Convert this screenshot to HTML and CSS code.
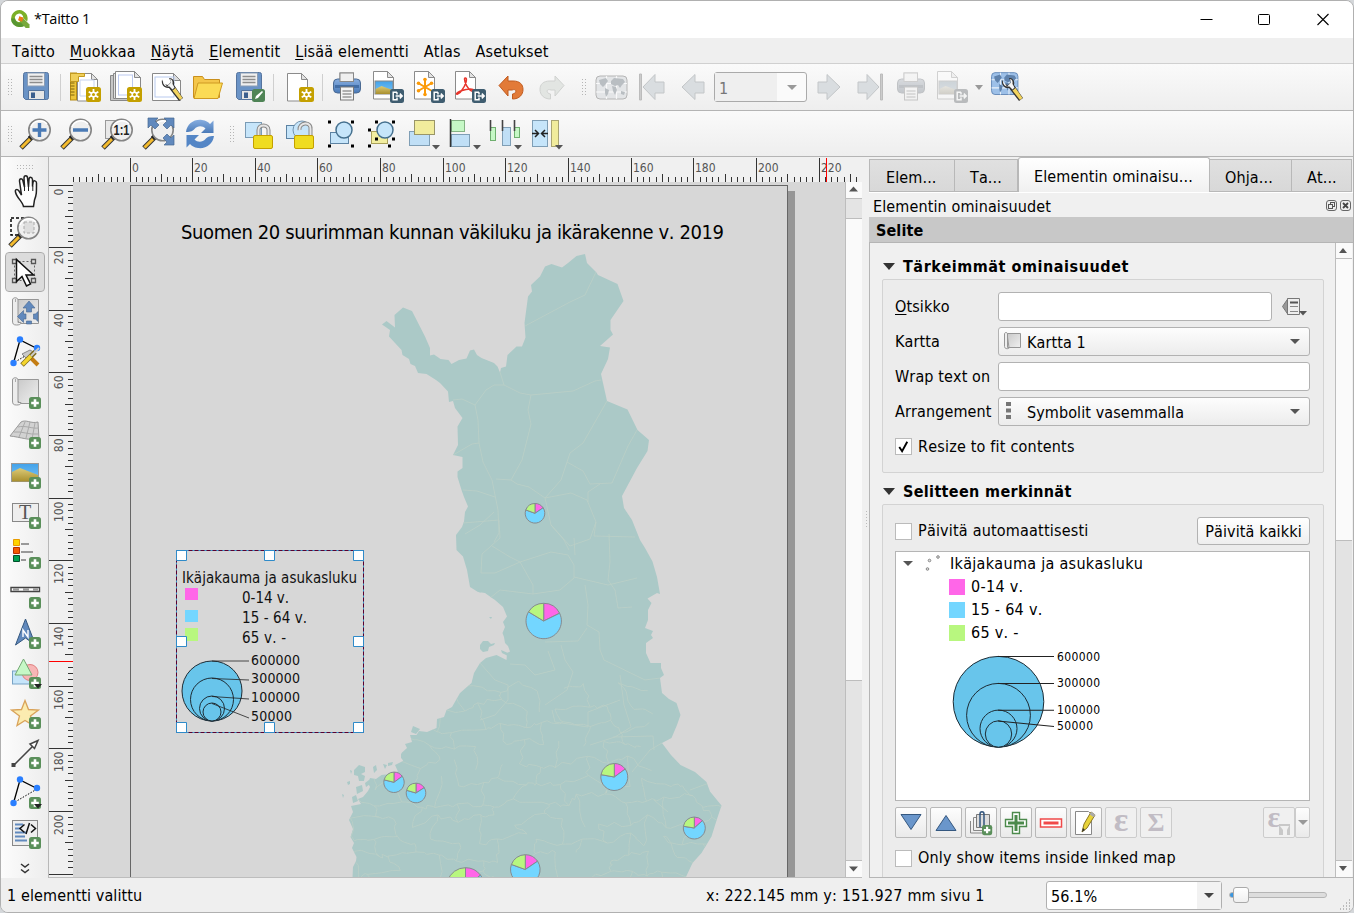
FILE: index.html
```html
<!DOCTYPE html>
<html lang="fi">
<head>
<meta charset="utf-8">
<title>*Taitto 1</title>
<link rel="stylesheet" href="styles.css">
</head>
<body>
<svg class="defs" width="0" height="0">
  <defs>
    <linearGradient id="gGrey" x1="0" x2="1" y1="0" y2="1"><stop offset="0" stop-color="#c9c9c9"/><stop offset="1" stop-color="#f0f0f0"/></linearGradient>
    <linearGradient id="gBlue" x1="0" x2="0" y1="0" y2="1"><stop offset="0" stop-color="#86ade0"/><stop offset="1" stop-color="#4a7ab8"/></linearGradient>
    <linearGradient id="gSky" x1="0" x2="0" y1="0" y2="1"><stop offset="0" stop-color="#42a2ea"/><stop offset="1" stop-color="#7cc4f5"/></linearGradient>
    <linearGradient id="gSand" x1="0" x2="0" y1="0" y2="1"><stop offset="0" stop-color="#dccb78"/><stop offset="1" stop-color="#a98f2e"/></linearGradient>
    <g id="plus"><rect width="12" height="12" rx="2.5" fill="#5a8f5a"/><path d="M6 2.2v7.6M2.2 6h7.6" stroke="#fff" stroke-width="2.6"/></g>
    <g id="star"><rect width="15" height="15" rx="2.5" fill="#c4a000"/><path d="M7.5 2v11M2.7 4.7l9.6 5.6M2.7 10.3l9.6-5.6" stroke="#fff" stroke-width="1.8"/><circle cx="7.5" cy="7.5" r="3" fill="#fff"/><circle cx="7.5" cy="7.5" r="1.5" fill="#c4a000"/></g>
    <g id="export"><rect width="14" height="14" rx="2.5" fill="#3f5d70"/><path d="M7 3.2H3.2v7.6H7V8.5M7 3.2v2.3M5.6 7H12M9.8 4.6L12.2 7 9.8 9.4" fill="none" stroke="#fff" stroke-width="1.5"/></g>
    <g id="sheet"><path d="M.5.5h14l6 6v21.5H.5z" fill="#fff" stroke="#8b8b8b"/><path d="M14.5.5v6h6z" fill="#e3e3e3" stroke="#8b8b8b"/></g>
    <g id="floppy"><path d="M5.5 5.5a2 2 0 0 1 2-2h21a2 2 0 0 1 2 2v23a2 2 0 0 1-2 2h-21l-2-2z" fill="#6a93c6" stroke="#55749e"/><rect x="9.500" y="4" width="17" height="13" fill="#f0f0f0" stroke="#8a9db5"/><path d="M11.500 7.500h13M11.500 10.500h13M11.500 13.500h13" stroke="#8d8d8d" stroke-width="1.300"/><path d="M10.500 21.500h16v9h-16z" fill="#e6e6e6" stroke="#55749e"/><rect x="13" y="23.500" width="4" height="5.500" fill="#3c5f8e"/></g>
    <g id="lens"><path d="M3 32L15 20" stroke="#333" stroke-width="5"/><path d="M3.500 31.500L13 22" stroke="#f4bb2e" stroke-width="3"/><path d="M11.500 22.500l4-3.800" stroke="#222" stroke-width="4.500"/><circle cx="21.500" cy="14" r="10.700" fill="#efefef" stroke="#858585" stroke-width="1.600"/><path d="M13 11a9.500 9.500 0 0 1 16-3" stroke="#fff" stroke-width="1.500" fill="none"/></g>
    <g id="roll"><path d="M10.500 5.500h21v24h-18l-3-3z" fill="url(#gGrey)" stroke="#969696"/><path d="M5.500 6c0-3 5.500-3 5.500 0v22.500h3c0 2-2 2.500-4.500 2.500-3 0-4-1-4-4z" fill="#ececec" stroke="#969696"/><path d="M8.500 5v3" stroke="#aaa"/></g>
    <g id="printer"><rect x="11" y="4" width="13.500" height="11" fill="#eee" stroke="#888"/><rect x="4.500" y="10" width="27" height="14" rx="4" fill="url(#gBlue)" stroke="#4b6a92"/><rect x="11" y="4" width="13.500" height="8.500" fill="#efefef" stroke="#888"/><rect x="6" y="16" width="24" height="3" fill="#426ea6"/><rect x="11.500" y="18" width="13" height="13" fill="#f3f3f3" stroke="#777"/><path d="M13.500 22h9M13.500 25h9M13.500 28h9" stroke="#999" stroke-width="1.300"/></g>
    <g id="wrench"><path d="M11 9.500c-1 5 2 9 7 8.500l10 13 4-3-9-13c1-4-1-7-5-7l2 4-3 3-4-1z" fill="#333"/><path d="M12 11c0 4 2.500 6 6.500 5.500l3 3 2-2-2-3.500c.5-3-.5-4.500-2.500-5l1 3.500-4 4z" fill="#f5f5f5"/><path d="M21.500 20.500l7.500 9.500 2.500-2-7-10z" fill="#f2d35e"/></g>
    <g id="globe"><rect x="3" y="7" width="31" height="23" rx="4"/><path d="M13.500 7v23M23.500 7v23M3 14.500h31M3 23h31" stroke="#fff" stroke-width="1.200" opacity=".8"/></g>
    <path id="lands" d="M6 11l7-2 2 3-3 4-2 2-3-3zM12 19l4 2-1 4-2 3-1-4zM18 12l3-3 9 1 2 3-3 3-2 3-2-3-3 1-4-2zM19 17l4 1 1 3-2 5-2-4zM28 22l4 1-1 3-3-1z"/>
    <g id="photo"><rect x="4.500" y="9.500" width="27" height="18" fill="url(#gSky)" stroke="#999"/><path d="M5 18l8-4 18 7v6.500H5z" fill="url(#gSand)"/></g>
    <g id="nodes"><path d="M6.500 29L13 6l17 8.500" fill="none" stroke="#000" stroke-width="1.300"/><path d="M8 28l22-13" stroke="#000" stroke-dasharray="1.500 1.500"/><circle cx="13" cy="5.500" r="3.200" fill="#2a7fff"/><circle cx="30" cy="14" r="3.200" fill="#2a7fff"/><circle cx="6.500" cy="29" r="3.200" fill="#2a7fff"/></g>
    <path id="drop" d="M0 0h8l-4 4.500z" fill="#555"/>
    <path id="drop-dark" d="M0 0h8l-4 4.500z" fill="#222"/>
  </defs>
</svg>
<div class="window">
  <header class="titlebar">
    <svg class="logo" viewBox="0 0 20 20"><path d="M9.500 1a8.500 8.500 0 1 0 6 14.700L11.800 12A4.200 4.200 0 1 1 13.300 9l3.800 3.600A8.600 8.600 0 0 0 9.500 1z" fill="#7bb027"/><path d="M9.500 18A8.500 8.500 0 0 1 1 9.500h4.200a4.400 4.400 0 0 0 6.600 3.800l3.700 3A8.500 8.500 0 0 1 9.500 18z" fill="#589632"/><path d="M9 7.800l3.500.7 7 7V19h-3.800L9.500 12z" fill="#78a93a"/><path d="M8.500 7.600h4.300v4.200H8.500z" fill="#ee7913" transform="rotate(20 10 10)"/></svg>
    <span class="title">*Taitto 1</span>
    <svg class="controls" viewBox="0 0 140 20"><path d="M1.500 9.500h12" stroke="#000"/><rect x="59.500" y="4.500" width="11" height="10" rx="1" fill="none" stroke="#000"/><path d="M118.500 4l11 11M129.500 4l-11 11" stroke="#000" stroke-width="1.100"/></svg>
  </header>
  <nav class="menubar"><span>Taitto</span><span><u>M</u>uokkaa</span><span><u>N</u>äytä</span><span><u>E</u>lementit</span><span><u>L</u>isää elementti</span><span>Atlas</span><span>Asetukset</span></nav>

  <div class="toolbar">
    <i class="grip"></i>
    <svg class="ic" viewBox="0 0 36 36"><use href="#floppy"/></svg>
    <i class="sep sep-a"></i>
    <svg class="ic" viewBox="0 0 36 36"><use href="#sheet" x="9" y="4"/><rect x="2.500" y="4" width="6" height="27" fill="#edc53a" stroke="#b78c13"/><path d="M2.500 4.500h14v3h-6v5H2.500z" fill="#f0cf5a" stroke="#c39a20"/><path d="M2.500 14h4M2.500 17h4M2.500 20h4M2.500 23h4M2.500 26h4" stroke="#7e640f"/><path d="M12 11v16h14V11z" fill="none" stroke="#c6d3f0"/><use href="#star" x="18" y="18"/></svg>
    <svg class="ic" viewBox="0 0 36 36"><path d="M1.500 6.500h20v25h-20z" fill="#c7c7c7" stroke="#888"/><path d="M4.500 4.500h20v25h-20z" fill="#e0e0e0" stroke="#888"/><path d="M6.500 2.500h19l6 6v21h-25z" fill="#fff" stroke="#888"/><path d="M25.500 2.500v6h6z" fill="#e3e3e3" stroke="#888"/><rect x="9.500" y="6" width="14" height="20" fill="#fff" stroke="#bccaf0"/><use href="#star" x="18" y="18"/></svg>
    <svg class="ic" viewBox="0 0 36 36"><path d="M2.500 4.500h21l7 7v20h-28z" fill="#fff" stroke="#888"/><path d="M23.500 4.500v7h7z" fill="#ddd" stroke="#888"/><rect x="5" y="8" width="19" height="20" fill="none" stroke="#b8c9ee"/><use href="#wrench" x="1" y="1"/></svg>
    <svg class="ic" viewBox="0 0 36 36"><path d="M2.500 7.500h9l2 3h15v18h-26z" fill="#f4c64a" stroke="#c98f1d"/><path d="M7 14h24.500L27 29.500H3z" fill="#fbdb55" stroke="#cf9a22"/></svg>
    <svg class="ic" viewBox="0 0 36 36"><use href="#floppy" x="-1"/><rect x="20" y="20" width="13" height="13" rx="2.500" fill="#4f8456"/><path d="M23 30l1-3 6-5 1 1-5 6z" fill="#fff"/></svg>
    <i class="sep sep-b"></i>
    <svg class="ic" viewBox="0 0 36 36"><use href="#sheet" x="4" y="4"/><use href="#star" x="16" y="18"/></svg>
    <i class="sep sep-c"></i>
    <svg class="ic" viewBox="0 0 36 36"><use href="#printer"/></svg>
    <svg class="ic" viewBox="0 0 36 36"><use href="#sheet" x="3" y="2"/><rect x="5" y="12" width="18" height="13" fill="url(#gSky)" stroke="#888"/><path d="M5.500 20l6-3 11 4v4h-17z" fill="url(#gSand)"/><use href="#export" x="20" y="20"/></svg>
    <svg class="ic" viewBox="0 0 36 36"><use href="#sheet" x="3" y="2"/><path d="M14 10v16M7 14l14 8M7 22l14-8" stroke="#fb9a08" stroke-width="2"/><circle cx="14" cy="10.500" r="1.800" fill="#fb9a08"/><circle cx="14" cy="25.500" r="1.800" fill="#fb9a08"/><circle cx="7.500" cy="14.300" r="1.800" fill="#fb9a08"/><circle cx="20.500" cy="14.300" r="1.800" fill="#fb9a08"/><circle cx="7.500" cy="21.700" r="1.800" fill="#fb9a08"/><use href="#export" x="20" y="20"/></svg>
    <svg class="ic" viewBox="0 0 36 36"><use href="#sheet" x="3" y="2"/><path d="M13 9c3-1 1 7-3 12-2 3-5 5-5.500 4 0-2 8-5 14-5 4 0 4 2 1 2-3-1-7-8-7-12 0-1 .200-1 .500-1z" fill="none" stroke="#e8352b" stroke-width="1.500"/><use href="#export" x="20" y="20"/></svg>
    <svg class="ic" viewBox="0 0 36 36"><path d="M6 16.500L15 7v5h5c7 0 10 3.500 10 8.500 0 5-3.500 9.500-10.500 9.500v-5c4 0 5-6-.500-4h-4v6z" fill="#e27a38" stroke="#c05a1e"/></svg>
    <svg class="ic" viewBox="0 0 36 36"><path d="M30 16.500L21 7v5h-5c-7 0-10 3.500-10 8.500 0 5 3.500 9.500 10.500 9.500v-5c-4 0-5-6 .500-4h4v6z" fill="#e2e5e2" stroke="#d0d2d0"/></svg>
    <i class="grip grip-b"></i>
    <svg class="ic" viewBox="0 0 36 36"><g fill="#e3e5e7" stroke="#b5b5b5"><use href="#globe"/></g><use href="#lands" fill="#b9bec2"/></svg>
    <svg class="ic" viewBox="0 0 36 36"><path d="M5.500 5v26h2V5z" fill="#ccc" stroke="#bcbcbc"/><path d="M9 18L21 5.500v7.500h9v11h-9v6.500z" fill="#d9dde0" stroke="#c3c6c8"/></svg>
    <svg class="ic" viewBox="0 0 36 36"><path d="M7 18L20 5.500v7.500h9v11h-9v6.500z" fill="#d9dde0" stroke="#c3c6c8"/></svg>
    <div class="pagebox"><span>1</span><b></b></div>
    <svg class="ic" viewBox="0 0 36 36"><path d="M29 18L16 5.500v7.500H7v11h9v6.500z" fill="#d9dde0" stroke="#c3c6c8"/></svg>
    <svg class="ic" viewBox="0 0 36 36"><path d="M28.500 5v26h2V5z" fill="#ccc" stroke="#bcbcbc"/><path d="M27 18L15 5.500v7.500H6v11h9v6.500z" fill="#d9dde0" stroke="#c3c6c8"/></svg>
    <svg class="ic dim" viewBox="0 0 36 36"><use href="#printer"/></svg>
    <svg class="ic dim" viewBox="0 0 36 36"><use href="#sheet" x="3" y="2"/><rect x="5" y="12" width="18" height="13" fill="url(#gSky)" stroke="#888"/><path d="M5.500 20l6-3 11 4v4h-17z" fill="url(#gSand)"/><use href="#export" x="20" y="20"/></svg>
    <i class="arrow"></i>
    <svg class="ic" viewBox="0 0 36 36"><g transform="translate(0 -3) scale(.85 .95)"><g fill="#9dc0e8" stroke="#6086b5"><use href="#globe"/></g><use href="#lands" fill="#5f82ac"/></g><use href="#wrench" x="2" y="1"/></svg>
  </div>

  <div class="toolbar toolbar-view">
    <i class="grip"></i>
    <svg class="ic" viewBox="0 0 36 36"><use href="#lens"/><path d="M21.500 7v14M14.500 14h14" stroke="#4a7ab5" stroke-width="3.400"/></svg>
    <svg class="ic" viewBox="0 0 36 36"><use href="#lens"/><path d="M14 14h15" stroke="#4a7ab5" stroke-width="3.400"/></svg>
    <svg class="ic" viewBox="0 0 36 36"><rect x="5.500" y="4.500" width="14" height="18" fill="#e8e8e8" stroke="#999"/><use href="#lens"/><text x="13.500" y="19" class="onetoone" textLength="16" lengthAdjust="spacingAndGlyphs">1:1</text></svg>
    <svg class="ic" viewBox="0 0 36 36"><use href="#lens"/><path d="M7 2h10l-3 3 4 4-4 4-4-4-3 3zM33 2H23l3 3-4 4 4 4 4-4 3 3zM33 29H23l3-3-4-4 4-4 4 4 3-3z" fill="#6189bd" stroke="#46678f" stroke-width=".7"/></svg>
    <svg class="ic" viewBox="0 0 36 36"><path d="M4 16C5 8 12 3 20 4c4 .500 6 2 8 4l3.500-3.500V17H19l4.500-4.500c-3-3-8-3-11 .500-2 2-3 3-8.500 3z" fill="url(#gBlue)"/><path d="M32 20c-1 8-8 13-16 12-4-.500-6-2-8-4l-3.500 3.500V19H17l-4.500 4.500c3 3 8 3 11-.500 2-2 3-3 8.500-3z" fill="#5486c6"/></svg>
    <i class="grip grip-b"></i>
    <svg class="ic" viewBox="0 0 36 36"><rect x="4.500" y="6.500" width="16" height="15" fill="#c6e5fa" stroke="#7a9bb5"/><path d="M17.500 21v-7c0-6 10-6 10 0v7" fill="none" stroke="#888" stroke-width="4"/><path d="M17.500 21v-7c0-6 10-6 10 0v7" fill="none" stroke="#e6e6e6" stroke-width="2"/><rect x="12.500" y="19.500" width="19" height="13" rx="1.500" fill="#efdc20" stroke="#c4a000"/></svg>
    <svg class="ic" viewBox="0 0 36 36"><rect x="4.500" y="9.500" width="16" height="13" fill="#c6e5fa" stroke="#5d83a3"/><circle cx="20" cy="14" r="9" fill="#c6e5fa" stroke="#7293ae"/><path d="M17.500 14c-1-8 12-9 11-1v8" fill="none" stroke="#888" stroke-width="4"/><path d="M17.500 14c-1-8 12-9 11-1v8" fill="none" stroke="#e6e6e6" stroke-width="2"/><rect x="12.500" y="19.500" width="19" height="13" rx="1.500" fill="#efdc20" stroke="#c4a000"/></svg>
    <svg class="ic" viewBox="0 0 36 36"><rect x="7.500" y="16.500" width="18" height="11" fill="#c6e5fa" stroke="#5d83a3"/><circle cx="21" cy="14" r="8" fill="#c6e5fa" stroke="#46718f" stroke-width="1.500"/><path d="M5 6h3M28 6h3M5 30h3M28 30h3" stroke="#000" stroke-width="3"/></svg>
    <svg class="ic" viewBox="0 0 36 36"><rect x="7.500" y="15.500" width="16" height="12" fill="#f2eea0" stroke="#aaa15b"/><circle cx="21" cy="14" r="8" fill="#c6e5fa" stroke="#46718f" stroke-width="1.500"/><path d="M11 6h3M28 6h3M4 14h3M11 23h3M28 23h3M4 30h3M24 30h3" stroke="#000" stroke-width="3"/></svg>
    <svg class="ic" viewBox="0 0 36 36"><rect x="4.500" y="15.500" width="20" height="14" fill="#c0dff6" stroke="#7f9eb5"/><rect x="9.500" y="4.500" width="20" height="14" fill="#f1ec9c" stroke="#999568"/><use href="#drop" x="27" y="29"/></svg>
    <svg class="ic" viewBox="0 0 36 36"><rect x="5.500" y="4.500" width="13" height="11" fill="#c6f8c6" stroke="#84b284"/><rect x="5.500" y="18.500" width="18" height="12" fill="#c0dff6" stroke="#7f9eb5"/><path d="M4.500 3v28" stroke="#333" stroke-width="1.500"/><use href="#drop" x="27" y="29"/></svg>
    <svg class="ic" viewBox="0 0 36 36"><rect x="3.500" y="11.500" width="5" height="13" fill="#c6f8c6" stroke="#6faf6f"/><rect x="15.500" y="11.500" width="8" height="18" fill="#c0dff6" stroke="#7f9eb5"/><rect x="27.500" y="11.500" width="5" height="10" fill="#c6f8c6" stroke="#6faf6f"/><path d="M3.500 4v11M15.500 4v11M27.500 4v11" stroke="#444" stroke-width="1.600"/><use href="#drop" x="27" y="29"/></svg>
    <svg class="ic" viewBox="0 0 36 36"><rect x="4.500" y="4.500" width="15" height="26" fill="#c6e5fa" stroke="#7f9eb5"/><rect x="23.500" y="4.500" width="7" height="26" fill="#f1ec9c" stroke="#aaa573"/><path d="M4 17.500h6M7 14l3.500 3.500L7 21M20 17.500h-6M17 14l-3.500 3.500L17 21" fill="none" stroke="#222" stroke-width="1.500"/><use href="#drop" x="27" y="29"/></svg>
  </div>

  <main class="workspace">
    <aside class="toolbox">
      <i class="grip-h"></i>
      <svg class="ic" viewBox="0 0 36 36"><path d="M16.500 32.500c-1-5-7-9-8-14.500-.800-3 2-3 3.500-1l2.500 4-2-14c0-3 3-3 3.500 0l1.500 6-.500-9c0-3 3.500-3 3.500 0l1 9 .500-7.500c0-3 3-3 3.500 0v7l.500-4c.500-2.500 3.500-2 3.500.500 0 10 0 12-2 17l-1 6.500z" fill="#fff" stroke="#222" stroke-width="1.500"/><path d="M17.500 12v5M21.500 11v6M25.800 12v5" stroke="#222"/></svg>
      <svg class="ic" viewBox="0 0 36 36"><path d="M4 4h20v17H4z" fill="none" stroke="#000" stroke-width="1.500" stroke-dasharray="3 2"/><use href="#lens"/><path d="M17 8h10v11H17z" fill="#dedede" stroke="#aaa" stroke-dasharray="3 2"/></svg>
      <svg class="ic selected" viewBox="0 0 36 36"><rect x="7.500" y="7.500" width="20" height="19" fill="none" stroke="#666" stroke-dasharray="2 2"/><path d="M5.500 5.500h4v4h-4zM24.500 5.500h4v4h-4zM5.500 24.500h4v4h-4zM24.500 24.500h4v4h-4z" fill="#ddd" stroke="#555" stroke-width="1.300"/><path d="M9.500 5.500v22l5.500-5 4.500 9.500 4-2-4.500-9h7.500z" fill="#fff" stroke="#111" stroke-width="1.500"/></svg>
      <svg class="ic" viewBox="0 0 36 36"><use href="#roll"/><path d="M22 7l6 7h-3.500v4h-5v-4H16zM10.500 22.500l6-6v3.500h2.500v5h-2.500v3.500zM31 17.500v10l-2.500-2.500h-2v-5h2zM19.500 30v-3h5v3z" fill="#6189bd" stroke="#46678f" stroke-width=".6"/></svg>
      <svg class="ic" viewBox="0 0 36 36"><use href="#nodes"/><path d="M15 20l8-4 5 3-8 6z" fill="#c9c9c9" stroke="#888"/><path d="M22 22l9 9" stroke="#c47d13" stroke-width="4"/><path d="M15 31l13-13" stroke="#7e6b20" stroke-width="5"/><path d="M15.500 30.500L24 22" stroke="#f4d52e" stroke-width="3.500"/><path d="M24 22l8-8" stroke="#ccc" stroke-width="2"/></svg>
      <svg class="ic" viewBox="0 0 36 36"><use href="#roll"/><use href="#plus" x="22" y="23"/></svg>
      <svg class="ic" viewBox="0 0 36 36"><path d="M14 8c5-3 10 2 17 0l1 17c-9 2-19-2-29-3z" fill="#d2d2d2" stroke="#999"/><path d="M11 13c7-2 14 2 21 1M7 18c8-1 15 3 24 2M18 8L12 23M23 8l-4 16M28 9l-3 16" stroke="#aaa" fill="none"/><use href="#plus" x="22" y="23"/></svg>
      <svg class="ic" viewBox="0 0 36 36"><use href="#photo"/><use href="#plus" x="22" y="23"/></svg>
      <svg class="ic" viewBox="0 0 36 36"><rect x="5.500" y="9.500" width="26" height="18" fill="#eee" stroke="#888"/><text x="18" y="24.500" class="icon-t">T</text><use href="#plus" x="22" y="23"/></svg>
      <svg class="ic" viewBox="0 0 36 36"><path d="M6.500 5.500h6v6h-6z" fill="#ffd400" stroke="#e79b00"/><path d="M6.500 13.500h6v6h-6z" fill="#f25a00" stroke="#b92d00"/><path d="M6.500 21.500h6v6h-6z" fill="#00a050" stroke="#00502b"/><path d="M14 10h8M14 18h12M14 26h5" stroke="#999" stroke-width="2"/><use href="#plus" x="22" y="23"/></svg>
      <svg class="ic" viewBox="0 0 36 36"><path d="M4 12.500h28.500v4H4z" fill="#fff" stroke="#444" stroke-width="1.400"/><path d="M6 14.500h6M16 14.500h6M26 14.500h5" stroke="#999" stroke-width="2.500"/><use href="#plus" x="22" y="22"/></svg>
      <svg class="ic" viewBox="0 0 36 36"><path d="M18.500 4l10 26-10-7-10 7z" fill="#6189bd" stroke="#35587f"/><path d="M16 22v-7l5 7v-7" stroke="#fff" stroke-width="1.400" fill="none"/><use href="#plus" x="22" y="22"/></svg>
      <svg class="ic" viewBox="0 0 36 36"><rect x="5.500" y="16" width="18" height="13" fill="#c6e5fa" stroke="#79a3c6"/><circle cx="23" cy="17.500" r="8" fill="#f7b6b6" stroke="#e08080"/><path d="M16.500 4l8.500 16H8z" fill="#c6f8c6" stroke="#74a874"/><use href="#plus" x="22" y="22"/><use href="#drop-dark" x="27" y="29"/></svg>
      <svg class="ic" viewBox="0 0 36 36"><path d="M18 5.500l3.500 9 10 .500-8 6 3 9.500-8.500-5-8 5 2.500-9.500-8-6 10-.500z" fill="#fbecb0" stroke="#d9a35a" stroke-width="1.300"/><use href="#plus" x="22" y="22"/></svg>
      <svg class="ic" viewBox="0 0 36 36"><path d="M7 30L27 10" stroke="#444" stroke-width="1.500"/><path d="M31 5.500l-8 3.500 4.500 4.500z" fill="#fff" stroke="#444" stroke-width="1.500"/><path d="M4.500 28h4v4h-4z" fill="#444"/><use href="#plus" x="22" y="22"/></svg>
      <svg class="ic" viewBox="0 0 36 36"><use href="#nodes" y="-1"/><use href="#plus" x="22" y="22"/><use href="#drop-dark" x="27" y="29"/></svg>
      <svg class="ic" viewBox="0 0 36 36"><rect x="5.500" y="5.500" width="25" height="25" fill="#eee" stroke="#888"/><path d="M8 9.500h8M8 13.500h6M8 17.500h12M8 21.500h10M8 25.500h12" stroke="#6189bd" stroke-width="2"/><path d="M17.500 9.500L13 13.500l4.500 4M24 9.500l4.500 4-4.500 4M22.500 8l-3.500 11" fill="none" stroke="#111" stroke-width="1.500"/><use href="#plus" x="22" y="22"/></svg>
      <svg class="more" viewBox="0 0 10 12"><path d="M1 1l4 3 4-3M1 6.500l4 3 4-3" fill="none" stroke="#333" stroke-width="1.500"/></svg>
    </aside>

    <svg class="canvas" viewBox="49 157 813 721">
      <defs>
        <path id="land" d="M585 254L587 263 592 268 596 272 598 275 617.500 284 623.500 301 610.500 320 610.500 330 613 334.500 600 346 610 347.500 608 359 601 374 607 401 627.500 409.500 637.500 430 649 440 647.500 451 637 468 622 496 624 508 632 520 640 540 645 548 652.500 561.500 657 577 660 594 657 593 647.500 598.500 651.500 603 648 610 648 620 645 628 653 631 651 635 653 638 646 643 646 653 650.500 663 661 663 661 668 664 675 660 678 662 693 669 699 676.500 703 680.500 715 677 725 671.500 738 662 743 671 755 680.500 765 695 772 706.500 782 710 791.500 721.500 805.500 717 819 711.500 836.500 701.500 853 692.500 863 685.500 878 352.500 878 353 867 356 861 356.500 857 352 848 354 843 350.500 837 353 829 349 820 353 812 351 806 361 804 358 799 363 797 368 791 370 787 368 783 370 778 376 779 381.500 775 390 774 398 771.500 395 765 403 761 401.500 753 407 748 405 744 412 742 410 735 416.500 735 419 731 427 732 436.500 728 437 719 444 717 446.500 710 452 707 460 693 471.500 683 474 673 480 663 486 658 496.500 655 506.500 660 507 653 510 651.500 508 646 505 643 504 637 502.500 633 505 627 503 622 507 616.500 503 607 495 600 492 598 485 593 478 592 470 587 467 570 463 556.500 456.500 550 456 535 462 527 464 521.500 465 512 468 506.500 464 497 461.500 490 457.500 477 457.500 471.500 462.500 468 462.500 457 453 455 458 445 457.500 426.500 462.500 418 455 408 453 401 449 402 448 391.500 440 383 436 380 426.500 374 418 373 415 366 410.500 364 409 359 402.500 355 401.500 350 389 336.500 390 330 382 324.500 386.500 321 395 327.500 394.500 315 403 307.500 412 311 425 336.500 430 348 430 355.500 434 354.500 440.500 359 448.500 360 451.500 364 459 360 466.500 358.500 470 350.500 474 349.500 477 355 481.500 358 494 363 497.500 366.500 500 372.500 501 368 506 366.500 507.500 355 516.500 346.500 522 346.500 525.500 337.500 524.500 323 528 296.500 532 291.500 531 285 540 276.500 545 266.500 551.500 264 562 267.500 568 263 576.500 256z"/>
        <clipPath id="landClip"><use href="#land"/></clipPath>
        <clipPath id="view"><rect x="73" y="182" width="772" height="695"/></clipPath>
      </defs>
      <rect x="49" y="157" width="813" height="721" fill="#f0f0f0"/>
      <g clip-path="url(#view)">
        <rect x="73" y="182" width="773" height="696" fill="#d7d7d7"/>
        <rect x="788" y="191" width="7" height="690" fill="#969696"/>
        <rect x="130.500" y="185.500" width="657" height="710" fill="#d7d7d7" stroke="#666"/>
        <use href="#land" fill="#abc9c7"/>
        <g fill="#abc9c7"><path d="M480 645l3-4 5 0 3 3 4-1-1 2-5 2-1 4-5 1-3-3zM501 650l7 3 0 3-6-3zM354 770l5-5 6 2 0 5-4 2 4 2-1 5-5 0-1-5-4-1zM373 767l3-2 1 5-3 3zM347 782l3-1 0 3-2 1zM342 794l2 1-1 3zM383 764l4 1-2 4zM356 787l6-2 1 6-6 3zM352 797l4-2 2 6-5 2zM413 726l7 3-4 5-5-2zM401 754l3-2 0 9-3-3zM489 617l3 0-1 2zM478 588l4 2-2 3zM388 763l5-1-1 3-4 1zM365 783l4-3 1 4-4 3zM350 770l2 1-1 3z"/></g>
        <g class="borders" clip-path="url(#landClip)">
          <path d="M596 272L585 295 570 302 525 326"/><path d="M500 372L504 385 520 393 531 395 573 391 595 381 601 380"/><path d="M504 385L494 385 486 390 475 405 462 399 453 400"/><path d="M475 405L478 420 479 443 483 462 492 480 498 510 499 533 494 542"/><path d="M531 395L528 410 531 424 522 460 511 480 496 479"/><path d="M607 401L583 443 570 453 566 465 561 480 545 498 529 487 517 484 511 480"/><path d="M637 430L628 446 612 483 590 484 583 471 567 462"/><path d="M545 498L571 493 587 500 596 522 594 536 635 537"/><path d="M545 498L551 525 564 540 569 550"/><path d="M600 484L588 492 588 502"/><path d="M463 490L477 491 495 497M465 534L480 525 494 512"/><path d="M453 455L472 444 479 443"/>
          <path d="M463 523L499 520 500 538 482 554 481 573 495 573 520 562 533 585 533 594"/><path d="M492 546L510 557 520 562 551 552 568 555 574 565 574 578 560 590 533 594 500 590 490 598"/><path d="M551 525L570 546 590 539 596 522M574 538L575 555"/><path d="M609 534L610 562 608 580 615 590 618 608 632 607M574 577L608 585 637 578M585 585L588 605 587 625 599 632 600 650 604 660 645 680 660 678"/><path d="M545 642L578 641 587 628M561 645L565 660 573 672 567 690 545 705M548 651L555 670 535 675 525 665 510 664"/><path d="M480 663L495 680 508 685 508 700 495 715 480 720"/><path d="M552 710L555 722 588 727 588 712 620 700M620 675L624 705 631 727 615 737 590 745M613 737L653 736 654 750"/><path d="M632 772L650 750 662 743M690 790L709 783M654 800L668 812"/>
          <g id="mesh"></g>
        </g>
        <g id="pies" stroke="#858a8e" stroke-width="1"></g>
        <text x="181" y="239" class="map-title" textLength="543">Suomen 20 suurimman kunnan väkiluku ja ikärakenne v. 2019</text>
        <g class="legend-text">
          <text x="182" y="583" textLength="175">Ikäjakauma ja asukasluku</text>
          <text x="242" y="603" textLength="47">0-14 v.</text><text x="242" y="623" textLength="65">15 - 64 v.</text><text x="242" y="643" textLength="44">65 v. -</text>
          <text x="251" y="665" textLength="49" class="num">600000</text><text x="251" y="683" textLength="49" class="num">300000</text><text x="251" y="702" textLength="49" class="num">100000</text><text x="251" y="721" textLength="41" class="num">50000</text>
        </g>
        <path d="M185 588h13v12h-13z" fill="#ff66e8"/><path d="M185 610h13v12h-13z" fill="#73d6ff"/><path d="M185 628h13v13h-13z" fill="#b8f77f"/>
        <g fill="#68c5eb" stroke="#1d2c35"><circle cx="212" cy="691" r="30"/><circle cx="212" cy="699.500" r="21.500"/><circle cx="212" cy="708.500" r="12.500"/><circle cx="212" cy="712" r="9"/></g>
        <path d="M212 661h37M212 678.500l37 1.500M212 696.500l37 2.500M212 703.500l37 14.500" stroke="#222" stroke-width=".8"/>
        <rect x="176.500" y="550.500" width="187" height="182" fill="none" stroke="#3aa0d0"/><rect x="176.500" y="550.500" width="187" height="182" fill="none" stroke="#5a0030" stroke-dasharray="4 2"/>
        <g fill="#fff" stroke="#2f8bc9"><path d="M176.500 550.500h10v10h-10zM264.500 550.500h10v10h-10zM353.500 550.500h10v10h-10zM176.500 636.500h10v10h-10zM353.500 636.500h10v10h-10zM176.500 722.500h10v10h-10zM264.500 722.500h10v10h-10zM353.500 722.500h10v10h-10z"/></g>
      </g>
      <g id="rulers"></g>
      <rect x="845" y="182" width="17" height="696" fill="#e4e4e4"/><path d="M846 182h16v16h-16zM846 219h16v461h-16zM846 861h16v16h-16z" fill="#fafafa"/><path d="M845.500 182v695M845 198.500h17M845 218.500h17M845 680.500h17M845 860.500h17M49 877.500h813" stroke="#bdbdbd" fill="none"/>
      <path d="M849 191.500h9l-4.500-5zM849 866.500h9l-4.500 5z" fill="#555"/>
    </svg>
    <div class="splitter"></div>

    <section class="dock">
      <div class="tabs"><span class="tab t1">Elem...</span><span class="tab t2">Ta...</span><span class="tab active">Elementin ominaisu...</span><span class="tab t4">Ohja...</span><span class="tab t5">At...</span></div>
      <div class="dock-title"><span>Elementin ominaisuudet</span>
        <svg viewBox="0 0 26 12"><rect x=".5" y=".5" width="10" height="10" rx="2.500" fill="#eee" stroke="#666"/><rect x="4.500" y="2.500" width="4" height="4" fill="none" stroke="#555"/><rect x="2.500" y="4.500" width="4" height="4" fill="#eee" stroke="#555"/><rect x="14.500" y=".5" width="10" height="10" rx="2.500" fill="#eee" stroke="#666"/><path d="M17 3l5 5M22 3l-5 5" stroke="#444" stroke-width="1.800"/></svg>
      </div>
      <div class="item-title">Selite</div>
      <div class="scroll">
        <div class="form">
          <h3>Tärkeimmät ominaisuudet</h3>
          <div class="group props">
            <label><u>O</u>tsikko</label><div class="pair"><div class="field"></div>
              <svg class="dd" viewBox="0 0 28 20"><path d="M6 1.500L.500 9.500 6 17.500z" fill="#999" stroke="#777"/><path d="M5.500 1.500h12v16h-12z" fill="#eee" stroke="#777"/><path d="M8 5.500h8" stroke="#555" stroke-width="2"/><path d="M8 9.500h8M8 14.500h8" stroke="#888"/><use href="#drop" x="17" y="14"/></svg></div>
            <label>Kartta</label><div class="combo"><svg class="ci" viewBox="0 0 20 20"><path d="M4 2.500h13.500v14H6z" fill="url(#gGrey)" stroke="#969696"/><path d="M1.500 3c0-2 3-2 3 0v13.500h2c0 1.500-5 2-5-1z" fill="#eee" stroke="#969696"/></svg>Kartta 1<b></b></div>
            <label>Wrap text on</label><div class="field"></div>
            <label>Arrangement</label><div class="combo"><svg class="ci" viewBox="0 0 20 20"><path d="M3 1h5v4H3zM3 7.500h5v4H3zM3 14h5v4H3z" fill="#777"/></svg>Symbolit vasemmalla<b></b></div>
            <div class="check"><i class="box"><svg viewBox="0 0 16 16"><path d="M3.500 8.500L6.500 13 12 3" fill="none" stroke="#000" stroke-width="2"/></svg></i>Resize to fit contents</div>
          </div>
          <h3 class="second">Selitteen merkinnät</h3>
          <div class="group items">
            <div class="row"><div class="check"><i class="box"></i>Päivitä automaattisesti</div><div class="button">Päivitä kaikki</div></div>
            <div class="tree">
              <div class="node"><b></b><svg viewBox="0 0 18 18"><g fill="#ddd" stroke="#888"><circle cx="3.500" cy="14" r="1.300"/><circle cx="5.500" cy="5.500" r="1.300"/><circle cx="14" cy="2" r="1.300"/></g></svg><span>Ikäjakauma ja asukasluku</span></div>
              <div class="leaf"><i class="sw pink"></i>0-14 v.</div>
              <div class="leaf"><i class="sw blue"></i>15 - 64 v.</div>
              <div class="leaf"><i class="sw green"></i>65 v. -</div>
              <svg class="sizes" viewBox="950 650 160 100"><g fill="#68c5eb" stroke="#1d2c35"><circle cx="998.500" cy="701.700" r="45.300"/><circle cx="998.500" cy="715.300" r="31.900"/><circle cx="998.500" cy="728.600" r="18.500"/><circle cx="998.500" cy="734" r="13.200"/></g><path d="M998 656.500h56M998 683.500h56M998 710.200h56M998 721l56 5.500" stroke="#222" stroke-width="1.100"/>
                <g class="num"><text x="1057" y="661" textLength="43">600000</text><text x="1057" y="687" textLength="43">300000</text><text x="1057" y="714" textLength="43">100000</text><text x="1057" y="730" textLength="36">50000</text></g></svg>
            </div>
            <div class="buttons">
              <i class="btn"><svg viewBox="0 0 32 28"><path d="M6 5.500h20L16 20.500z" fill="#6a96cb" stroke="#34577f"/></svg></i>
              <i class="btn"><svg viewBox="0 0 32 28"><path d="M6 21.500h20L16 6.500z" fill="#6a96cb" stroke="#34577f"/></svg></i>
              <i class="btn"><svg viewBox="0 0 32 28"><path d="M5.500 12v12h13M8.500 8.500h14v13h-14z" fill="none" stroke="#888"/><path d="M11.500 5.500h13v13h-13z" fill="#ddd" stroke="#777"/><path d="M15 18V5c0-3 4-3 4 0v12" fill="none" stroke="#34577f" stroke-width="1.500"/><g transform="translate(17 16) scale(.85)"><use href="#plus"/></g></svg></i>
              <i class="btn"><svg viewBox="0 0 32 28"><path d="M12.500 3.500h7v7h7v7h-7v7h-7v-7h-7v-7h7z" fill="#fff" stroke="#4b8a4b" stroke-width="1.400"/><path d="M16 6v16M8 14h16" stroke="#4b8a4b" stroke-width="3"/></svg></i>
              <i class="btn"><svg viewBox="0 0 32 28"><rect x="5.500" y="10" width="21" height="8" fill="#fff" stroke="#f04a4a" stroke-width="1.500"/><path d="M8.500 14h15" stroke="#f04a4a" stroke-width="3"/></svg></i>
              <i class="btn"><svg viewBox="0 0 32 28"><path d="M5.500 2.500h13l3 3v20h-16z" fill="#fff" stroke="#888"/><path d="M12 23l2-8 7-12 4 3-8 13z" fill="#e8d33a" stroke="#8b7621"/><path d="M12 23l1-4 2 2z" fill="#333"/><path d="M20.500 4l4 3" stroke="#aaa" stroke-width="3"/></svg></i>
              <i class="btn off"><span class="eps">ε</span></i><i class="btn off"><span>Σ</span></i>
              <i class="btn off filter"><span class="eps">ε</span><svg viewBox="0 0 11 11"><path d="M0 0h11v11H8V6L10 2H1l3 4v5H0z" fill="#c8c8c8"/></svg></i><i class="btn drop"><b></b></i>
            </div>
            <div class="check last"><i class="box"></i>Only show items inside linked map</div>
          </div>
        </div>
        <div class="vbar"><i class="up"></i><i class="thumb"></i><i class="track"></i><i class="down"></i></div>
      </div>
    </section>
  </main>

  <footer class="status"><span class="msg">1 elementti valittu</span><span class="pos">x: 222.145 mm y: 151.927 mm sivu 1</span><div class="zoom">56.1%<i><b></b></i></div><div class="slider"><i></i></div>
    <svg class="size-grip" viewBox="0 0 12 12"><path d="M9 1h1M6 4h1M9 4h1M3 7h1M6 7h1M9 7h1M0 10h1M3 10h1M6 10h1M9 10h1" stroke="#aaa" stroke-width="1.300"/></svg></footer>
</div>
<script src="layout.js"></script>
</body>
</html>
```
FILE: styles.css
```css
* { box-sizing: border-box; }
body { margin: 0; width: 1354px; height: 913px; overflow: hidden; background: #d4d7da; color: #000;
  font: 16px/20px "DejaVu Sans Condensed", "DejaVu Sans", "Noto Sans", sans-serif; font-stretch: condensed; font-kerning: none; letter-spacing: .12px; }
.defs { display: block; position: absolute; }
i { font-style: normal; }
svg { display: block; flex: none; letter-spacing: 0; }
u { text-decoration-thickness: 1px; text-underline-offset: 2px; }

.window { width: 1354px; height: 913px; display: grid; grid-template-rows: 37px 26px 47px 46px 721px 34px;
  border: 1px solid #b0b0b0; border-radius: 8px; overflow: hidden; background: #f0f0f0; }
.titlebar { display: flex; align-items: center; background: #fff; padding-left: 9px; }
.logo { width: 20px; height: 20px; margin-top: -1px; }
.title { font: 14.500px/20px "Open Sans", "Noto Sans", sans-serif; font-stretch: normal; margin: -1px 0 0 4px; letter-spacing: -.3px; }
.controls { width: 140px; height: 20px; margin-left: auto; margin-right: 14px; }
.menubar { display: flex; gap: 14.900px; align-items: center; padding: 2px 0 0 11px; border-bottom: 1px solid #d0d0d0; background: #efefef; white-space: nowrap; letter-spacing: .2px; }

.toolbar { display: flex; align-items: center; gap: 5px; padding-left: 6px; border-bottom: 1px solid #b4b4b4; background: linear-gradient(#fafafa, #eee); }
.toolbar-view { padding-top: 1px; }
.ic { width: 36px; height: 36px; }
.dim { opacity: .35; filter: grayscale(.8); }
.grip { width: 6px; height: 18px; background: radial-gradient(circle, #b5b5b5 .8px, transparent 1px) 0 0 / 3px 3px; }
.grip-b { margin-left: 6px; margin-right: 1px; }
.sep { width: 1px; height: 27px; background: #cfcfcf; }
.sep-a { margin-left: 1px; margin-right: 2px; }
.sep-b { margin-right: 4px; }
.sep-c { margin-left: -2px; margin-right: 1px; }
.pagebox { width: 93px; height: 30px; margin: 0 -1px 0 -2px; display: flex; align-items: center; border: 1px solid #aaa; border-radius: 3px; background: #fafafa; color: #777; }
.pagebox span { flex: 1; padding: 2px 0 0 4px; height: 28px; line-height: 27px; background: #efefef; }
.pagebox b { margin: 0 9px 0 10px; border: 5px solid transparent; border-top-color: #999; border-bottom: 0; }
.arrow { border: 4.500px solid transparent; border-top: 5px solid #999; border-bottom: 0; margin-right: 1px; }
.onetoone { font: bold 14px "Liberation Sans", sans-serif; fill: #222; }
.icon-t { font: 20px "Liberation Serif", serif; fill: #555; text-anchor: middle; }

.workspace { display: grid; grid-template-columns: 48px 813px 7px 484px; min-height: 0; }
.toolbox { display: flex; flex-direction: column; align-items: center; gap: 4.060px; padding-top: 7px; border-right: 1px solid #b8b8b8; background: linear-gradient(90deg, #fcfcfc, #ededed); overflow: hidden; }
.grip-h { width: 18px; height: 6px; background: radial-gradient(circle, #b5b5b5 .8px, transparent 1px) 0 0 / 3px 3px; }
.toolbox .ic { flex: none; }
.toolbox .selected { outline: 1px solid #aaa; outline-offset: 1px; border-radius: 2px; background: #dcdcdc; box-shadow: 0 0 0 1px #dcdcdc; }
.more { width: 10px; height: 12px; margin-top: 8px; }
.canvas { width: 813px; height: 721px; font-stretch: condensed; }
.map-title { font-size: 20px; fill: #000; }
.legend-text { font-size: 15px; fill: #111; }
.legend-text .num { font-size: 14px; }
.borders path { fill: none; stroke: #bbcfc6; stroke-width: .8; }
.ruler-num { font-size: 12px; fill: #555; }
.splitter { background: radial-gradient(circle, #bbb .8px, transparent 1px) 0 0 / 3px 3px content-box; padding: 353px 1px 350px 3px; }

.dock { display: flex; flex-direction: column; min-width: 0; white-space: nowrap; }
.tabs { display: flex; height: 36px; align-items: flex-end; border-bottom: 1px solid #fff; padding-top: 1px; }
.tab { height: 33px; border: 1px solid #b8b8b8; border-left-width: 0; background: linear-gradient(#e0e0e0, #d8d8d8); line-height: 36px; padding-left: 15px; }
.t1 { width: 86px; border-left-width: 1px; padding-left: 16px; } .t2 { width: 63px; } .t4 { width: 82px; } .t5 { width: 60px; }
.active { width: 192px; height: 35px; border-bottom: 0; border-left-width: 1px; background: linear-gradient(#fff, #f0f0f0); border-radius: 3px 3px 0 0; line-height: 37px; }
.dock-title { height: 24px; display: flex; align-items: center; justify-content: space-between; padding: 3px 1px 0 4px; }
.dock-title svg { width: 26px; height: 12px; margin-top: -1px; }
.item-title { height: 26px; line-height: 27px; background: #c8c8c8; font-weight: bold; padding-left: 7px; border-bottom: 1px solid #b5b5b5; }
.scroll { height: 635px; display: flex; border-left: 1px solid #b5b5b5; border-bottom: 1px solid #b5b5b5; overflow: hidden; }
.form { width: 465px; padding: 0 11px 0 12px; }
h3 { margin: 0; height: 36px; padding: 14px 0 0 21px; font-size: 16px; line-height: 20px; letter-spacing: .55px; position: relative; }
h3::before { content: ""; position: absolute; left: 1px; top: 20px; border: 6px solid transparent; border-top: 7px solid #333; border-bottom: 0; }
h3.second { height: 31px; padding-top: 9px; letter-spacing: .35px; }
h3.second::before { top: 15px; }
.group { border: 1px solid #d3d3d3; border-radius: 2px; background: #ececec; }
.props { height: 194px; display: grid; grid-template-columns: 103px 312px; grid-auto-rows: 29px; row-gap: 6px; padding: 12px; align-items: center; }
.props label { padding-top: 1px; }
.pair { display: flex; justify-content: space-between; align-items: center; }
.pair .field { width: 274px; }
.dd { width: 28px; height: 20px; }
.field, .combo, .button { height: 29px; border: 1px solid #b2b2b2; border-radius: 3px; background: #fff; }
.combo { display: flex; align-items: center; background: linear-gradient(#fdfdfd, #ececec); padding: 2px 9px 0 4px; letter-spacing: .1px; }
.combo b { margin: -2px 0 0 auto; border: 5px solid transparent; border-top-color: #555; border-bottom: 0; }
.ci { width: 20px; height: 20px; margin: -4px 4px 0 0; }
.check { display: flex; align-items: center; grid-column: 1 / 3; letter-spacing: .2px; }
.box { width: 17px; height: 17px; background: #fff; border: 1px solid #bbb; margin-right: 6px; }
.items { height: 380px; padding: 12px; }
.row { display: flex; justify-content: space-between; align-items: center; width: 415px; height: 28px; margin-bottom: 6px; }
.button { width: 113px; text-align: center; line-height: 28px; background: linear-gradient(#fff, #eee); height: 28px; }
.tree { width: 415px; height: 250px; border: 1px solid #b5b5b5; background: #fff; }
.node { display: flex; align-items: center; height: 23px; letter-spacing: .3px; }
.node b { border: 5px solid transparent; border-top-color: #555; border-bottom: 0; margin: 0 11px 0 7px; }
.node svg { width: 18px; height: 18px; margin-right: 8px; }
.leaf { display: flex; align-items: center; height: 23px; padding-left: 53px; letter-spacing: .3px; }
.sw { width: 16px; height: 16px; margin-right: 6px; }
.sizes { width: 160px; height: 100px; margin: 6px 0 0 54px; }
.pink { background: #ff66e8; } .blue { background: #73d6ff; } .green { background: #b8f77f; }
.sizes .num { font-size: 12px; }
.buttons { display: flex; gap: 3px; width: 415px; margin-top: 6px; height: 31px; }
.btn { width: 32px; height: 31px; border: 1px solid #b8b8b8; border-radius: 2px; background: linear-gradient(#fdfdfd, #eaeaea); display: flex; align-items: center; justify-content: center; flex: none; }
.btn > svg { width: 32px; height: 28px; }
.off { border-color: #ccc; background: #f0f0f0; color: #c1bcc4; font: bold 26px/26px "Liberation Serif", serif; }
.eps { font-size: 34px; line-height: 20px; margin-top: -6px; }
.filter { margin-left: auto; align-items: flex-start; }
.filter .eps { font-size: 30px; margin-top: -1px; }
.filter > svg { width: 11px; height: 11px; margin: 16px 0 0 -1px; }
.drop { width: 15px; margin-left: -3px; border-color: #ccc; }
.drop b { border: 5px solid transparent; border-top-color: #999; border-bottom: 0; }
.last { margin-top: 10px; }
.vbar { width: 17px; border-left: 1px solid #bdbdbd; display: flex; flex-direction: column; background: #e3e3e3; }
.up, .down { height: 16px; background: #fafafa; border-bottom: 1px solid #bdbdbd; }
.down { border-top: 1px solid #bdbdbd; border-bottom: 0; height: 17px; }
.up::before { content: ""; display: block; margin: 5px 0 0 3px; width: 0; border: 4.500px solid transparent; border-bottom: 5px solid #555; border-top: 0; }
.down::before { content: ""; display: block; margin: 5px 0 0 3px; width: 0; border: 4.500px solid transparent; border-top: 5px solid #555; border-bottom: 0; }
.thumb { height: 282px; background: #fafafa; border-bottom: 1px solid #bdbdbd; }
.track { flex: 1; }

.status { display: flex; align-items: center; padding: 2px 0 0 6px; background: #efefef; white-space: nowrap; position: relative; }
.msg { width: 699px; }
.pos { width: 340px; letter-spacing: .19px; }
.zoom { width: 176px; height: 29px; border: 1px solid #b0b0b0; border-radius: 3px; background: #fff; padding-left: 4px; line-height: 29px; display: flex; margin-top: -1px; flex: none; }
.zoom i { margin-left: auto; width: 24px; background: #f2f2f2; display: flex; align-items: center; justify-content: center; }
.zoom b { border: 5px solid transparent; border-top-color: #444; border-bottom: 0; }
.slider { width: 98px; height: 6px; margin-left: 7px; margin-top: -3px; border: 1px solid #b5b5b5; border-radius: 3px; background: linear-gradient(90deg, #3a96e0 8px, #ddd 8px); }
.slider i { display: block; width: 16px; height: 16px; margin: -6px 0 0 3px; border: 1px solid #aaa; border-radius: 3px; background: linear-gradient(#fff, #f0f0f0); }
.size-grip { width: 12px; height: 12px; position: absolute; right: 1px; bottom: 1px; }
```
FILE: layout.js
```js
const NS = 'http://www.w3.org/2000/svg';
function add(parent, tag, attrs, text) {
  const el = document.createElementNS(NS, tag);
  for (const k in attrs) el.setAttribute(k, attrs[k]);
  if (text !== undefined) el.textContent = text;
  parent.appendChild(el);
}

// Rulers: one tick per 2 mm, a longer one per 10 mm, a full one per 20 mm.
const rulers = document.getElementById('rulers');
const mm = 3.1325;
let ticks = '';
for (let v = -18; v <= 232; v += 2) {
  const x = Math.floor(130 + v * mm) + .5;
  if (x < 73) continue;
  const full = v >= 0 && v % 20 === 0;
  ticks += `M${x} ${full ? 158 : v % 10 === 0 ? 174 : 177}V182`;
  if (full) add(rulers, 'text', {x: x + 1.5, y: 172, class: 'ruler-num'}, v);
}
for (let v = 0; v <= 220; v += 2) {
  const y = Math.floor(185 + v * mm) + .5;
  const full = v % 20 === 0;
  ticks += `M${full ? 49 : v % 10 === 0 ? 65 : 68} ${y}H73`;
  if (full && v < 220) add(rulers, 'text', {transform: `translate(63 ${y + 3}) rotate(-90)`, 'text-anchor': 'end', class: 'ruler-num'}, v);
}
add(rulers, 'path', {d: ticks, stroke: '#333', fill: 'none'});
add(rulers, 'path', {d: 'M826.5 158V182M49 661.5H73', stroke: '#f00', fill: 'none'});

// Pie charts: centre, radius, end of the pink slice and start of the green slice in degrees.
const pies = document.getElementById('pies');
const pt = (cx, cy, r, a) => `${cx + r * Math.sin(a * Math.PI / 180)} ${cy - r * Math.cos(a * Math.PI / 180)}`;
[[535, 513.3, 9.8, 56, 290], [543.7, 621, 17.7, 64, 301], [394, 782.3, 10.2, 54, 284], [416, 793, 9.8, 57, 286],
 [614.3, 777, 13.5, 54, 280], [694.3, 828, 11, 48, 279], [525.3, 869.5, 14.8, 56, 290], [465.5, 886.5, 18.8, 53, 288]
].forEach(([x, y, r, a, b]) => {
  [[0, a, '#ff66e8'], [a, b, '#73d6ff'], [b, 360, '#b8f77f']].forEach(([s, e, fill]) =>
    add(pies, 'path', {d: `M${x} ${y}L${pt(x, y, r, s)}A${r} ${r} 0 ${e - s > 180 ? 1 : 0} 1 ${pt(x, y, r, e)}z`, fill}));
});

// Municipality borders of the dense southern part.
let seed = 11;
const rnd = () => (seed = (seed * 16807) % 2147483647) / 2147483647;
const grid = [];
for (let r = 0; r < 12; r++) {
  grid.push([]);
  for (let c = 0; c < 19; c++) grid[r].push([345 + c * 21 + rnd() * 15, 680 + r * 19 + rnd() * 15]);
}
let mesh = '';
function edge(p, q) {
  mesh += `M${p[0]} ${p[1]}`;
  for (let i = 1; i < 4; i++) mesh += `L${p[0] + (q[0] - p[0]) * i / 4 + rnd() * 5 - 2.5} ${p[1] + (q[1] - p[1]) * i / 4 + rnd() * 5 - 2.5}`;
  mesh += `L${q[0]} ${q[1]}`;
}
for (let r = 0; r < 11; r++) for (let c = 0; c < 18; c++) {
  if (c > 13 && r < 5) continue;
  if (rnd() > .18) edge(grid[r][c], grid[r][c + 1]);
  if ((r + c) % 2) edge(grid[r][c], grid[r + 1][c]);
}
add(document.getElementById('mesh'), 'path', {d: mesh});
```
